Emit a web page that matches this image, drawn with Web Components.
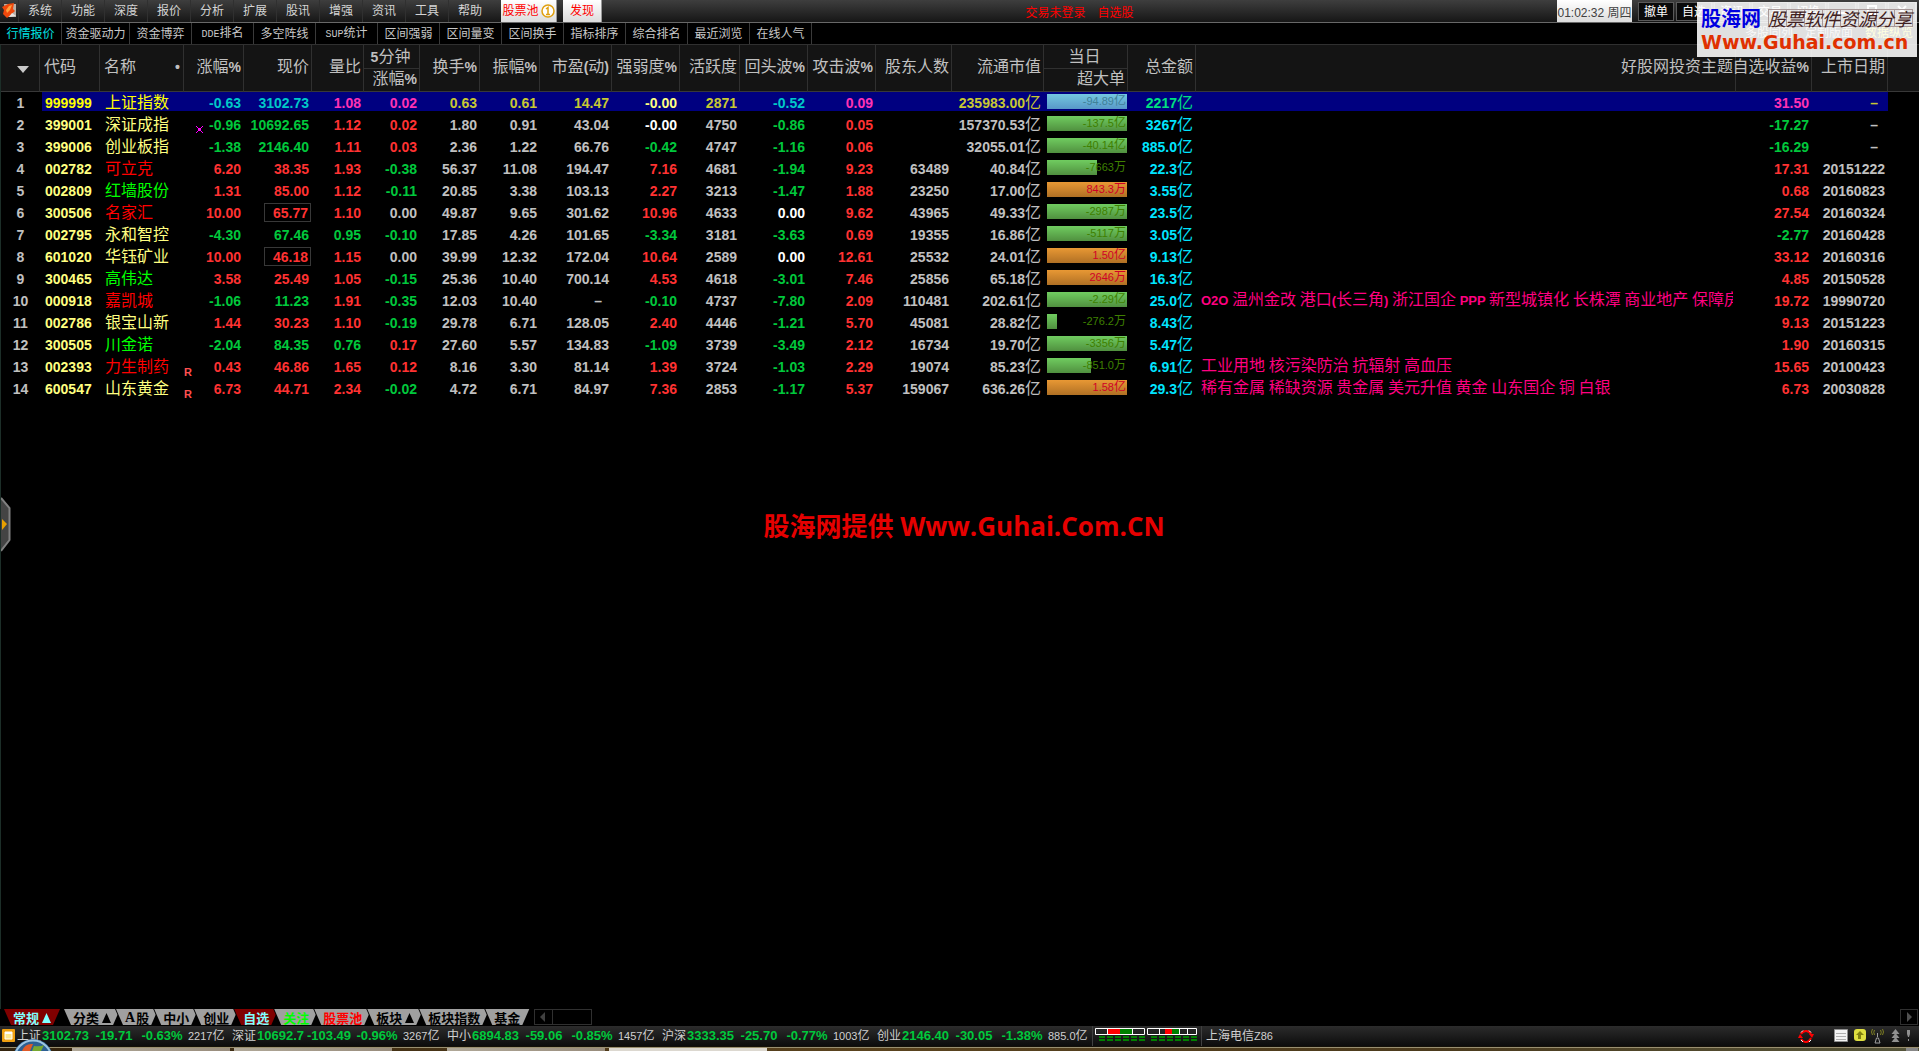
<!DOCTYPE html>
<html lang="zh-CN">
<head>
<meta charset="utf-8">
<title>行情报价</title>
<style>
html, body { margin: 0; height: 100%; background: #000; }
body { font-family: "Liberation Sans", "Noto Sans CJK SC", sans-serif; color: #c0c0c0; overflow: hidden; }
</style>
</head>
<body>
<stock-app></stock-app>

<template id="t-app">
<style>
:host { display: flex; flex-direction: column; height: 100vh; position: relative; }
main { flex: 1; min-height: 0; position: relative; border-left: 1px solid #1c2e28; box-sizing: border-box; overflow: hidden; }
</style>
<menu-bar></menu-bar>
<tool-bar></tool-bar>
<main>
<quote-table></quote-table>
<side-handle></side-handle>
<center-mark>股海网提供 Www.Guhai.Com.CN</center-mark>
</main>
<group-tabs></group-tabs>
<index-bar></index-bar>
<task-strip></task-strip>
<corner-mark></corner-mark>
</template>

<template id="t-menu">
<style>
:host { display: flex; height: 22px; border-bottom: 1px solid #686868; background: linear-gradient(#3e3e3e, #161616); font-size: 12px; align-items: stretch; }
button { font: inherit; line-height: 20px; padding: 0; border: 0; margin: 0; background: none; color: #d4d4d4; cursor: pointer; white-space: nowrap; }
.logo { width: 18px; display: flex; align-items: center; justify-content: center; }
nav { display: flex; }
nav button { width: 43px; border-left: 1px solid #303030; }
.hot { display: flex; gap: 6px; margin-left: 10px; }
.hot button { background: linear-gradient(#fff, #dcdcdc); color: #f00; border-right: 1px solid #999; display: flex; align-items: center; justify-content: center; gap: 2px; }
.hot button:first-child { width: 56px; }
.hot button:last-child { width: 39px; }
.login { display: flex; gap: 12px; color: #f00; flex: 1; justify-content: center; align-items: center; }
.clock { width: 75px; background: linear-gradient(#fff, #dcdcdc); color: #404040; display: flex; align-items: center; justify-content: center; white-space: nowrap; }
.right { display: flex; gap: 2px; padding: 2px 1px 1px 6px; width: 287px; box-sizing: border-box; }
.right button { width: 36px; flex: none; border: 1px solid #5a5a5a; background: #0a0a0a; color: #fff; line-height: 16px; box-sizing: border-box; }
.right .w { width: 28px; }
</style>
<span class="logo"><svg width="15" height="16" viewBox="0 0 15 16"><path d="M2 1h12v13H4z" fill="#b8b0a8"/><path d="M0 4 6 1 12 0 11 6 13 8 5 15 1 11 2 7z" fill="#f0480c"/><path d="M7 3 10 2 8 7 5 10 4 7z" fill="#ffa040"/><path d="M10 10 14 13 7 14z" fill="#e8e4e0"/></svg></span>
<nav></nav>
<div class="hot"><button>股票池<svg width="14" height="14" viewBox="0 0 14 14"><circle cx="7" cy="7" r="6" fill="#fff" stroke="#e0a010" stroke-width="1.500"/><path d="M5 5 7 3.500V10M5 10.500h4" fill="none" stroke="#e0a010" stroke-width="1.500"/></svg></button><button>发现</button></div>
<div class="login"><span>交易未登录</span><span>自选股</span></div>
<div class="clock">01:02:32 周四</div>
<div class="right"><button>撤单</button><button>自选</button><button>资讯</button><button>交易</button><button>切换</button><button class="w" aria-label="最小化"><svg width="12" height="12" viewBox="0 0 12 12"><path d="M1 9h10" stroke="#fff" stroke-width="2"/></svg></button><button class="w" aria-label="还原"><svg width="12" height="12" viewBox="0 0 12 12"><path d="M2 2h8v8H2z" fill="none" stroke="#fff" stroke-width="2"/></svg></button><button class="w" aria-label="关闭"><svg width="12" height="12" viewBox="0 0 12 12"><path d="M2 2l8 8M10 2l-8 8" stroke="#fff" stroke-width="2"/></svg></button></div>
</template>

<template id="t-tool">
<style>
:host { display: flex; height: 21px; border-bottom: 1px solid #303030; background: #000; font-size: 12px; justify-content: space-between; }
nav { display: flex; }
button { font: inherit; line-height: 18px; width: 62px; padding: 0; border: 0; border-right: 1px solid #3a3a3a; background: none; color: #c8c8c8; white-space: nowrap; cursor: pointer; }
button.wide { width: 68px; }
button.on { color: #00e0e0; }
tt { font-family: "Liberation Mono", monospace; font-size: 10px; }
.r { display: flex; gap: 12px; padding-right: 6px; line-height: 20px; }
.r a { color: #c8c8c8; text-decoration: none; }
.r a:last-child { color: #ff0; }
</style>
<nav></nav>
<div class="r"><a href="#">多股同列</a><a href="#">定制版面</a><a href="#">数据纵览</a></div>
</template>

<template id="t-table">
<style>
:host { display: block; }
table { width: 100%; table-layout: fixed; border-collapse: separate; border-spacing: 0; font-weight: bold; font-size: 14px; line-height: 22px; }
i { font: normal 16px/0 "Noto Sans CJK SC", sans-serif; }
th, td { padding: 0 3px 0 0; text-align: right; white-space: nowrap; }
th { background: #141414; height: 44px; border-bottom: 1px solid #383838; border-right: 1px solid #303030; padding: 0 2px 2px 0; text-indent: -6px; color: #c0c0c0; }
th:last-child { border-right: 0; }
th.l, td.l { text-align: left; padding-left: 5px; padding-right: 0; text-indent: 0; }
th.l { padding-left: 4px; }
th.nm span { float: right; padding-right: 3px; }
th.split { padding: 0; text-indent: 0; }
th.split div { line-height: 21px; height: 22px; padding-right: 2px; }
th.split div:first-child { line-height: 25px; height: 23px; border-bottom: 1px solid #303030; text-align: center; }
td { height: 22px; position: relative; }
td.no, th.no { text-align: center; padding: 0; text-indent: 0; color: #c0c0c0; }
th.no { padding-left: 6px; }
td.code { color: #ffff80; }
tr.sel td:not(.no):not(.end) { background: linear-gradient(#000080, #000080) 0 0 / 100% 19px no-repeat; }
tr.sel td.code:not(.no) { background-position: 2px 0; }
.red { color: #ff3232; } .green { color: #00c83c; } .gray { color: #c0c0c0; } .white { color: #fff; } .cyan { color: #00e5ff; }
.nred { color: #f00; } .ngreen { color: #0f0; } .nyel { color: #ffff80; }
.sel .red { color: #ff32b4; } .sel .green { color: #00c8c8; } .sel .gray { color: #c8c832; } .sel .white { color: #ffff80; } .sel .cyan { color: #00e080; }
.sel .code, .sel .nyel { color: #ff0; }
td.dash { padding-right: 10px; }
.theme { color: #ff0080; padding-left: 5px; text-align: left; font-size: 13px; }
.theme div { overflow-x: clip; overflow-y: visible; height: 22px; }
.box { display: inline-block; box-sizing: border-box; width: 47px; height: 19px; line-height: 19px; border: 1px solid #383838; padding-right: 2px; margin-right: -2px; vertical-align: top; margin-top: 1px; }
.mark { position: absolute; left: 0; bottom: 1px; font-size: 11px; line-height: 10px; color: #ff5050; }
.mark.x { left: 12px; bottom: 3px; }
.mark svg { display: block; }
.bar { margin: 2px 1px 5px 3px; height: 15px; line-height: 15px; font-weight: normal; font-size: 11px; text-align: right; padding-right: 1px; background: linear-gradient(#70cc60, #50903f) 0 0 / var(--w, 100%) 100% no-repeat; color: #3f8000; }
.bar i { font-size: 12px; }
.bar.up { background-image: linear-gradient(#e89834, #b07024); color: #d00028; }
.sel .bar { background-image: linear-gradient(#74c8e0, #5898c8); color: #408098; }
td.c { padding: 0; }
</style>
<table><colgroup></colgroup><thead><tr></tr></thead><tbody></tbody></table>
</template>

<template id="t-handle">
<style>:host { position: absolute; left: 0; top: 452px; } svg { display: block; }</style>
<svg width="10" height="55" viewBox="0 0 10 55"><path d="M0 .5 8.500 11V43L0 54z" fill="#444"/><path d="M0 1 8.500 11V43L0 54" fill="none" stroke="#808080" stroke-width="2"/><path d="M1 22 6 27 1 33z" fill="#e8a000"/></svg>
</template>

<template id="t-center">
<style>:host { position: absolute; left: 0; right: 0; top: 462px; padding-left: 8px; text-align: center; color: #e60000; font: bold 26px/38px "Open Sans", "Noto Sans CJK SC", sans-serif; }</style>
<slot></slot>
</template>

<template id="t-tabs">
<style>
:host { display: flex; height: 16px; padding: 0 1px 1px 3px; font: bold 13px/16px "Noto Sans CJK SC", sans-serif; }
button { font: inherit; border: 0; margin: 0 -6px 0 0; padding: 2px 10px 0; background: #000; color: #000; position: relative; z-index: 0; white-space: nowrap; clip-path: polygon(0 0, 100% 0, calc(100% - 7px) 100%, 7px 100%); display: flex; align-items: center; line-height: 16px; height: 16px; box-sizing: border-box; }
button::before { content: ""; position: absolute; inset: 0; z-index: -1; background: #a0a0a0; clip-path: polygon(1px 0, calc(100% - 1px) 0, calc(100% - 8px) 100%, 8px 100%); }
button.red::before { background: #800000; }
button.red { color: #80ffff; }
button.first { margin-right: 2px; }
button tt { font: bold 14px/16px "Liberation Serif", serif; margin-right: 1px; }
svg { margin-left: 3px; }
.sb { display: flex; margin-left: 10px; box-sizing: border-box; width: 58px; height: 16px; border: 1px solid #303030; }
.sb span { width: 17px; border-right: 1px solid #303030; }
.sb svg, .end svg { display: block; margin: 2px 0 0 5px; }
.end { margin-left: auto; width: 18px; height: 16px; box-sizing: border-box; border: 1px solid #303030; }
</style>
</template>

<template id="t-index">
<style>
:host { display: flex; height: 20px; background: linear-gradient(#2c2c2c, #0c0c0c); font-size: 12px; line-height: 20px; color: #d0d0d0; white-space: nowrap; }
svg { display: block; flex: none; }
.ico { margin: 3px 2px 0; width: 13px; }
.g { display: grid; grid-template-columns: 25px 48px 48px 48px 46px; }
.g b { font-size: 13px; color: #00c83c; text-align: center; }
.g b:nth-child(2) { text-align: left; }
.g span:last-child { padding-left: 2px; font-size: 11px; }
.g em { font: 12px/0 "Noto Sans CJK SC", sans-serif; }
.m { border-left: 1px solid #404040; border-right: 1px solid #404040; padding: 2px 2px 0; margin-right: 4px; }
.net small { font-size: 11px; }
.tray { display: flex; margin-left: auto; padding: 3px 1px 0 0; }
</style>
<svg class="ico" viewBox="0 0 13 13" height="13"><rect width="13" height="13" rx="1" fill="#f0a010"/><path d="M3 3h7v7H3z" fill="#ffe890" stroke="#fff"/><path d="M3 3h7v2H3z" fill="#fff"/></svg>
<slot></slot>
</template>

<template id="t-task">
<style>
:host { display: block; height: 5px; position: relative; background: linear-gradient(90deg, #33230d, #5a431e 45%, #4b3a1c 75%, #55553a); border-top: 1px solid #141008; box-sizing: border-box; }
.row { display: flex; gap: 4px; padding: 0 1px 0 72px; border-top: 1px solid #998f70; height: 3px; }
.row span { width: 158px; height: 3px; background: linear-gradient(90deg, #b0a898, #988c7c); }
.row .gap { margin-left: 51px; }
.row .lit { background: #dcd8d0; }
.row .last { margin-left: auto; width: 12px; background: #888; }
svg { position: absolute; left: 12px; bottom: 0; }
</style>
<div class="row"><span></span><span></span><span class="gap"></span><span class="lit"></span><span class="last"></span></div>
<svg width="42" height="12" viewBox="0 0 42 12"><circle cx="21" cy="20" r="20" fill="#2c5f92"/><circle cx="21" cy="20" r="18.500" fill="none" stroke="#9cc4e0" stroke-width="2"/><path d="M10 12Q13 4 21 5L18 12z" fill="#e05a28"/><path d="M22 7Q28 8 32 6L29 12H20z" fill="#78a830"/></svg>
</template>

<template id="t-corner">
<style>
:host { position: absolute; right: 2px; top: 2px; width: 220px; height: 55px; background: rgba(255, 255, 255, .88); box-sizing: border-box; padding: 3px 4px 0; white-space: nowrap; }
.a { display: flex; gap: 7px; align-items: center; height: 26px; }
strong { color: #0000e0; font: bold 20px/24px "Noto Sans CJK SC", sans-serif; }
em { flex: 1; color: #402020; font: italic 18px/18px "Noto Sans CJK SC", sans-serif; height: 18px; background: repeating-linear-gradient(90deg, #a89898 0 1px, transparent 1px 18px), linear-gradient(#a89898, #a89898) 0 0 / 100% 1px no-repeat, linear-gradient(#a89898, #a89898) 0 100% / 100% 1px no-repeat; }
.b { color: #e03000; font: bold 19px/22px "DejaVu Sans", sans-serif; }
</style>
<div class="a"><strong>股海网</strong><em>股票软件资源分享</em></div><div class="b">Www.Guhai.com.cn</div>
</template>

<script>
const fill = (host, id) => {
  const root = host.attachShadow({ mode: 'open' });
  root.append(document.getElementById(id).content.cloneNode(true));
  return root;
};
const simple = (tag, id) => customElements.define(tag, class extends HTMLElement {
  constructor() { super(); fill(this, id); }
});
// Chinese runs use the larger regular face; figures stay in the bold one.
const mix = s => s.replace(/[\u4e00-\u9fff]+/g, '<i>$&</i>');

customElements.define('menu-bar', class extends HTMLElement {
  constructor() {
    super();
    const r = fill(this, 't-menu');
    r.querySelector('nav').innerHTML = '系统 功能 深度 报价 分析 扩展 股讯 增强 资讯 工具 帮助'.split(' ').map(t => `<button>${t}</button>`).join('');
  }
});

customElements.define('tool-bar', class extends HTMLElement {
  constructor() {
    super();
    const r = fill(this, 't-tool');
    r.querySelector('nav').innerHTML = '行情报价 资金驱动力 资金博弈 DDE排名 多空阵线 SUP统计 区间强弱 区间量变 区间换手 指标排序 综合排名 最近浏览 在线人气'.split(' ')
      .map((t, i) => `<button class="${i ? '' : 'on'} ${t.length > 4 && !/[A-Z]/.test(t) ? 'wide' : ''}">${t.replace(/[A-Z]+/, '<tt>$&</tt>')}</button>`).join('');
  }
});

const widths = [39, 60, 84, 60, 68, 52, 56, 60, 60, 72, 68, 60, 68, 68, 76, 92, 84, 68, 0, 76, 76, 31];
const heads = ['', '代码', '名称', '涨幅%', '现价', '量比', '5分钟|涨幅%', '换手%', '振幅%', '市盈(动)', '强弱度%', '活跃度', '回头波%', '攻击波%', '股东人数', '流通市值', '当日|超大单', '总金额', '好股网投资主题', '自选收益%', '上市日期', ''];
// code, name, name colour, mark, chg, price, ratio, 5min, turnover, amplitude, pe, strength, active, back, attack, holders, cap, big order, bar width, total, profit, date
const rows = `999999,上证指数,nyel,,-0.63,3102.73,1.08,0.02,0.63,0.61,14.47,-0.00,2871,-0.52,0.09,,235983.00亿,-94.89亿,80,2217亿,31.50,–
399001,深证成指,nyel,x,-0.96,10692.65,1.12,0.02,1.80,0.91,43.04,-0.00,4750,-0.86,0.05,,157370.53亿,-137.5亿,80,3267亿,-17.27,–
399006,创业板指,nyel,,-1.38,2146.40,1.11,0.03,2.36,1.22,66.76,-0.42,4747,-1.16,0.06,,32055.01亿,-40.14亿,80,885.0亿,-16.29,–
002782,可立克,nred,,6.20,38.35,1.93,-0.38,56.37,11.08,194.47,7.16,4681,-1.94,9.23,63489,40.84亿,-7663万,50,22.3亿,17.31,20151222
002809,红墙股份,ngreen,,1.31,85.00,1.12,-0.11,20.85,3.38,103.13,2.27,3213,-1.47,1.88,23250,17.00亿,843.3万,80,3.55亿,0.68,20160823
300506,名家汇,nred,,10.00,65.77,1.10,0.00,49.87,9.65,301.62,10.96,4633,0.00,9.62,43965,49.33亿,-2987万,80,23.5亿,27.54,20160324
002795,永和智控,nyel,,-4.30,67.46,0.95,-0.10,17.85,4.26,101.65,-3.34,3181,-3.63,0.69,19355,16.86亿,-5117万,80,3.05亿,-2.77,20160428
601020,华钰矿业,nyel,,10.00,46.18,1.15,0.00,39.99,12.32,172.04,10.64,2589,0.00,12.61,25532,24.01亿,1.50亿,80,9.13亿,33.12,20160316
300465,高伟达,ngreen,,3.58,25.49,1.05,-0.15,25.36,10.40,700.14,4.53,4618,-3.01,7.46,25856,65.18亿,2646万,80,16.3亿,4.85,20150528
000918,嘉凯城,nred,,-1.06,11.23,1.91,-0.35,12.03,10.40,–,-0.10,4737,-7.80,2.09,110481,202.61亿,-2.29亿,80,25.0亿,19.72,19990720
002786,银宝山新,nyel,,1.44,30.23,1.10,-0.19,29.78,6.71,128.05,2.40,4446,-1.21,5.70,45081,28.82亿,-276.2万,10,8.43亿,9.13,20151223
300505,川金诺,ngreen,,-2.04,84.35,0.76,0.17,27.60,5.57,134.83,-1.09,3739,-3.49,2.12,16734,19.70亿,-3356万,80,5.47亿,1.90,20160315
002393,力生制药,nred,R,0.43,46.86,1.65,0.12,8.16,3.30,81.14,1.39,3724,-1.03,2.29,19074,85.23亿,-851.0万,44,6.91亿,15.65,20100423
600547,山东黄金,nyel,R,6.73,44.71,2.34,-0.02,4.72,6.71,84.97,7.36,2853,-1.17,5.37,159067,636.26亿,1.58亿,80,29.3亿,6.73,20030828`.split('\n').map(l => l.split(','));
const themes = {
  9: 'O2O 温州金改 港口(长三角) 浙江国企 PPP 新型城镇化 长株潭 商业地产 保障房',
  12: '工业用地 核污染防治 抗辐射 高血压',
  13: '稀有金属 稀缺资源 贵金属 美元升值 黄金 山东国企 铜 白银'
};
const sign = (v, zero = 'white') => +v > 0 ? 'red' : +v < 0 ? 'green' : zero;
const markOf = m => m === 'R' ? '<span class="mark">R</span>' : m === 'x'
  ? '<span class="mark x"><svg width="7" height="7" viewBox="0 0 7 7"><path d="M0 0h1v1h1v1h3V1h1V0h1v1H6v1H5v3h1v1h1v1H6V6H5V5H2v1H1v1H0V6h1V5h1V2H1V1H0z" fill="#f0f"/></svg></span>' : '';

customElements.define('quote-table', class extends HTMLElement {
  constructor() {
    super();
    const r = fill(this, 't-table');
    r.querySelector('colgroup').innerHTML = widths.map(w => `<col${w ? ` style="width:${w}px"` : ''}>`).join('');
    r.querySelector('thead tr').innerHTML = heads.map((h, i) => {
      if (i === 0) return '<th class="no"><svg width="12" height="7" viewBox="0 0 12 7"><path d="M0 0h12L6 7z" fill="#c8c8c8"/></svg></th>';
      if (h.includes('|')) return `<th class="split">${h.split('|').map(x => `<div>${mix(x)}</div>`).join('')}</th>`;
      return `<th class="${i === 1 ? 'l' : i === 2 ? 'l nm' : ''}">${mix(h)}${i === 2 ? '<span>•</span>' : ''}</th>`;
    }).join('');
    const td = (c, v) => `<td class="${c}${v === '–' ? ' dash' : ''}">${mix(v)}</td>`;
    r.querySelector('tbody').innerHTML = rows.map((d, n) => {
      const s = sign(d[4]);
      const price = d[4] === '10.00' ? `<span class="box">${d[5]}</span>` : d[5];
      return `<tr${n ? '' : ' class="sel"'}><td class="no">${n + 1}</td>` + td('l code', d[0]) + td('l ' + d[2], d[1]) +
        `<td class="${s}">${markOf(d[3])}${d[4]}</td>` + td(s, price) + td(+d[6] >= 1 ? 'red' : 'green', d[6]) + td(sign(d[7], 'gray'), d[7]) +
        td('gray', d[8]) + td('gray', d[9]) + td('gray', d[10]) + td(sign(d[11]), d[11]) + td('gray', d[12]) + td(sign(d[13]), d[13]) +
        td('red', d[14]) + td('gray', d[15]) + td('gray', d[16]) +
        `<td class="c"><div class="bar ${d[17][0] === '-' ? '' : 'up'}" style="--w:${d[18] / 80 * 100}%">${mix(d[17])}</div></td>` +
        td('cyan', d[19]) + `<td class="theme"><div>${mix(themes[n] || '')}</div></td>` + td(sign(d[20]), d[20]) + td('gray', d[21]) + '<td class="end"></td></tr>';
    }).join('');
  }
});

customElements.define('group-tabs', class extends HTMLElement {
  constructor() {
    super();
    const r = fill(this, 't-tabs');
    const up = '<svg width="9" height="10" viewBox="0 0 9 10"><path d="M0 10 4.500 0 9 10z" fill="currentColor"/></svg>';
    const box = document.createElement('template');
    box.innerHTML = '常规^ 分类^ A股 中小 创业 自选 关注 股票池 板块^ 板块指数 基金'.split(' ').map((t, i) =>
      `<button class="${i === 0 ? 'red first' : i === 5 ? 'red' : ''}"${i === 6 ? ' style="color:#0f0"' : i === 7 ? ' style="color:#f00"' : ''}>${t.replace('^', up).replace(/^A/, '<tt>A</tt>')}</button>`).join('') +
      '<div class="sb"><span><svg width="6" height="10" viewBox="0 0 6 10"><path d="M5 0v10L0 5z" fill="#404040"/></svg></span></div>' +
      '<div class="end"><svg width="6" height="10" viewBox="0 0 6 10"><path d="M1 0v10l5-5z" fill="#505050"/></svg></div>';
    r.append(box.content);
  }
});

customElements.define('index-bar', class extends HTMLElement {
  constructor() {
    super();
    const r = fill(this, 't-index');
    const g = [['上证', '3102.73', '-19.71', '-0.63%', '2217'], ['深证', '10692.7', '-103.49', '-0.96%', '3267'], ['中小', '6894.83', '-59.06', '-0.85%', '1457'], ['沪深', '3333.35', '-25.70', '-0.77%', '1003'], ['创业', '2146.40', '-30.05', '-1.38%', '885.0']]
      .map(x => `<div class="g"><span>${x[0]}</span><b>${x[1]}</b><b>${x[2]}</b><b>${x[3]}</b><span>${x[4]}<em>亿</em></span></div>`).join('');
    let dash = '';
    for (const x0 of [4, 56]) for (let i = 0; i < 6; i++) for (const y of [8, 11]) dash += `<path d="M${x0 + i * 8} ${y}h6v2h-6z" fill="#008000"/>`;
    const meter = `<div class="m"><svg width="104" height="15" viewBox="0 0 104 15"><path d="M13 1h12v5H13z" fill="red"/><path d="M25 1h12v5H25z" fill="green"/><path d="M70 1h7v5h-7z" fill="red"/><path d="M77 1h7v5h-7z" fill="green"/><path d="M.5.5h49v6H.5zM12.500 1v5M37.500 1v5M52.500.5h49v6h-49zM64.500 1v5M84.500 1v5M92.500 1v5" fill="none" stroke="#fff"/>${dash}</svg></div>`;
    const tray = `<svg width="120" height="17" viewBox="0 0 120 17">
      <path d="M3 5Q5 2 8 2T13 5M13 9Q11 13 8 13T3 10" fill="none" stroke="red" stroke-width="2"/><path d="M11 5h5l-2 4zM0 9h5L2 5z" fill="red"/><path d="M3 3.500l2-2M11 13l2-2M11 1.500l2 2M3 11l2 2" stroke="#fff"/>
      <path d="M36.500.5h13v12h-13z" fill="#f4f4f4" stroke="#909090"/><path d="M38 4.500h10M38 7.500h10M38 10.500h10" stroke="#b0b0b0"/>
      <rect x="56" y="0" width="12" height="12" rx="3" fill="#dede40"/><path d="M58 6l4-4 4 4h-3v4h-3V6z" fill="#808010"/>
      <path d="M79.500 4v4M77 14l1.500-5h2L82 14z" fill="none" stroke="#a0a0a0"/><path d="M76.500 1q-1.500 2 0 5M82.500 1q1.500 2 0 5M74.500 0q-2 3 0 6M84.500 0q2 3 0 6" fill="none" stroke="#808020"/>
      <path d="M97.500 0l4 5h-8zM97.500 4l4 5h-8zM97.500 8l4 5h-8z" fill="#909090"/>
      <path d="M109 1h3v4l-1 3h-1l-1-3zM110 10h1v2h-1z" fill="#909090"/></svg>`;
    const box = document.createElement('template');
    box.innerHTML = g + meter + '<span class="net">上海电信<small>Z86</small></span>' + '<div class="tray">' + tray + '</div>';
    r.append(box.content);
  }
});

simple('side-handle', 't-handle');
simple('center-mark', 't-center');
simple('task-strip', 't-task');
simple('corner-mark', 't-corner');
simple('stock-app', 't-app');
</script>
</body>
</html>
